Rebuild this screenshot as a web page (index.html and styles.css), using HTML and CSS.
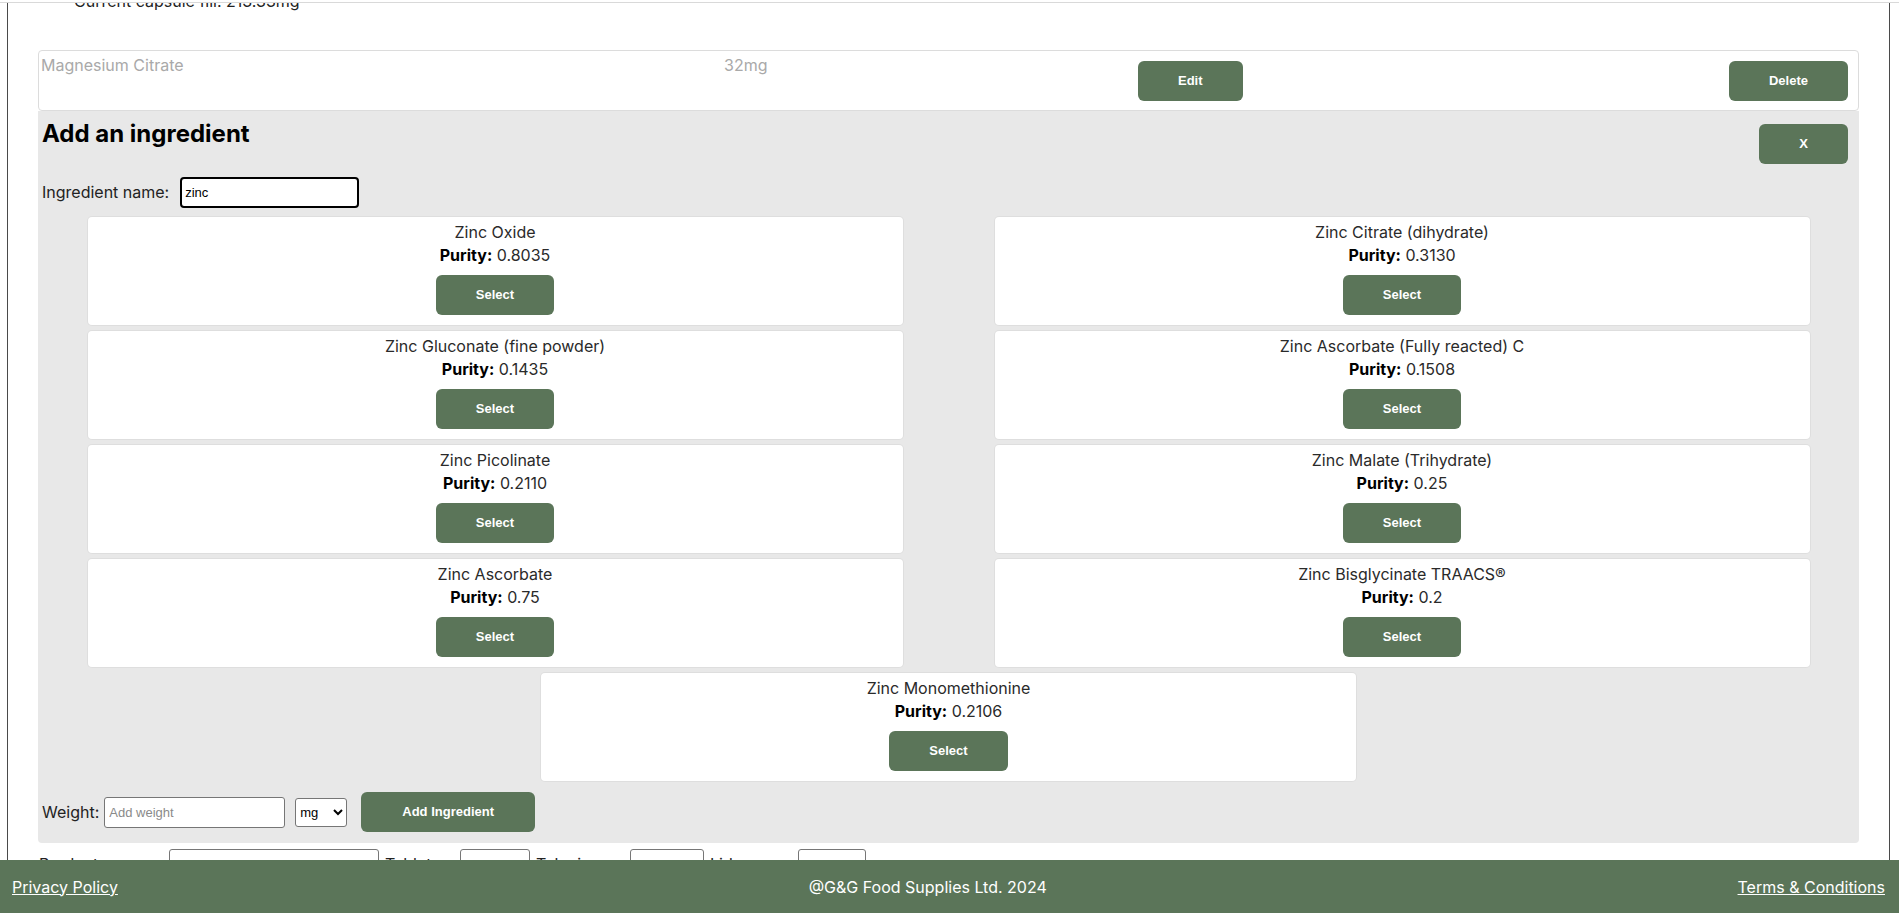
FILE: index.html
```html
<!DOCTYPE html>
<html lang="en">
<head>
<meta charset="utf-8">
<title>Add an ingredient</title>
<link rel="stylesheet" href="styles.css">
</head>
<body>
<div class="topbar"></div>
<div class="page">
  <p class="fill">Current capsule fill: 213.33mg</p>
  <div class="item-row">
    <span class="item-text">Magnesium Citrate</span>
    <span class="item-text">32mg</span>
    <button class="btn btn-edit">Edit</button>
    <button class="btn">Delete</button>
  </div>
  <section class="panel">
    <div class="panel-head">
      <h2>Add an ingredient</h2>
      <button class="btn btn-close">X</button>
    </div>
    <div class="name-row">
      <label class="lbl">Ingredient name:</label>
      <input class="name-input" type="text" value="zinc">
    </div>
    <div class="results">
      <div class="card"><div class="card-line">Zinc Oxide</div><div class="card-line"><b>Purity:</b> 0.8035</div><button class="btn btn-select">Select</button></div>
      <div class="card"><div class="card-line">Zinc Citrate (dihydrate)</div><div class="card-line"><b>Purity:</b> 0.3130</div><button class="btn btn-select">Select</button></div>
      <div class="card"><div class="card-line">Zinc Gluconate (fine powder)</div><div class="card-line"><b>Purity:</b> 0.1435</div><button class="btn btn-select">Select</button></div>
      <div class="card"><div class="card-line">Zinc Ascorbate (Fully reacted) C</div><div class="card-line"><b>Purity:</b> 0.1508</div><button class="btn btn-select">Select</button></div>
      <div class="card"><div class="card-line">Zinc Picolinate</div><div class="card-line"><b>Purity:</b> 0.2110</div><button class="btn btn-select">Select</button></div>
      <div class="card"><div class="card-line">Zinc Malate (Trihydrate)</div><div class="card-line"><b>Purity:</b> 0.25</div><button class="btn btn-select">Select</button></div>
      <div class="card"><div class="card-line">Zinc Ascorbate</div><div class="card-line"><b>Purity:</b> 0.75</div><button class="btn btn-select">Select</button></div>
      <div class="card"><div class="card-line">Zinc Bisglycinate TRAACS®</div><div class="card-line"><b>Purity:</b> 0.2</div><button class="btn btn-select">Select</button></div>
      <div class="card"><div class="card-line">Zinc Monomethionine</div><div class="card-line"><b>Purity:</b> 0.2106</div><button class="btn btn-select">Select</button></div>
    </div>
    <div class="weight-row">
      <label class="lbl">Weight:</label>
      <input class="weight-input" type="text" placeholder="Add weight">
      <select class="unit"><option>mg</option><option>g</option></select>
      <button class="btn btn-add">Add Ingredient</button>
    </div>
  </section>
  <div class="product-row">
    <label class="plbl plbl-1">Product name:</label>
    <input class="p-input p-in-1" type="text">
    <label class="plbl plbl-2">Tablets:</label>
    <input class="p-input p-in-2" type="text">
    <label class="plbl plbl-3">Tub size:</label>
    <input class="p-input p-in-3" type="text">
    <label class="plbl plbl-4">Lid:</label>
    <input class="p-input p-in-4" type="text">
  </div>
</div>
<footer class="footer">
  <a href="#">Privacy Policy</a>
  <span>@G&amp;G Food Supplies Ltd. 2024</span>
  <a href="#">Terms &amp; Conditions</a>
</footer>
</body>
</html>
```

FILE: styles.css
```css
html, body {
  margin: 0;
  padding: 0;
  height: 100%;
  overflow: hidden;
  background: #fff;
}
body {
  font-family: Inter, "Noto Sans", sans-serif;
  font-size: 16px;
  color: #222;
}
.topbar {
  position: fixed;
  top: 0;
  left: 0;
  right: 0;
  height: 2px;
  background: #fff;
  border-bottom: 1px solid #d9d9d9;
  z-index: 5;
}
.page {
  display: flow-root;
  margin: 0 9px 0 7px;
  padding: 0 30px;
  border-left: 1px solid #4a4a4a;
  border-right: 1px solid #4a4a4a;
  min-height: 900px;
}
.fill {
  margin: -8px 0 0 36px;
  line-height: 19px;
  color: #222;
}
.btn {
  box-sizing: border-box;
  font-family: "Liberation Sans", Arial, sans-serif;
  font-weight: bold;
  font-size: 13px;
  color: #fff;
  background: #5b7559;
  border: none;
  border-radius: 6px;
  height: 40px;
  padding: 0 40px 2px;
  cursor: pointer;
}
.item-row {
  margin-top: 39px;
  display: grid;
  grid-template-columns: 683px 414px 1fr auto;
  align-items: start;
  padding: 5px 10px 9px 2px;
  background: #fff;
  border: 1px solid #dcdcdc;
  border-radius: 4px;
}
.item-text {
  color: #a9a9a9;
  line-height: 19px;
}
.item-row .btn {
  margin-top: 5px;
}
.btn-edit {
  justify-self: start;
}
.panel {
  background: #e8e8e8;
  padding: 8px 11px 11px 4px;
  border-radius: 0 0 4px 4px;
}
.panel-head {
  display: flex;
  justify-content: space-between;
  align-items: flex-start;
}
.panel-head h2 {
  margin: 0;
  font-size: 24px;
  font-weight: 700;
  color: #000;
  line-height: 29px;
}
.btn-close {
  margin-top: 5px;
}
.name-row {
  margin-top: 13px;
  display: flex;
  align-items: center;
}
.lbl {
  color: #222;
  line-height: 19px;
}
.name-row .lbl {
  margin-right: 11px;
}
.name-input {
  box-sizing: border-box;
  width: 179px;
  height: 31px;
  border: 2px solid #000;
  border-radius: 4px;
  padding: 1px 3px;
  font-family: "Liberation Sans", Arial, sans-serif;
  font-size: 13px;
  color: #000;
  background: #fff;
  outline: none;
}
.results {
  margin: 9px -7px 0 0;
  display: flex;
  flex-wrap: wrap;
  justify-content: center;
  column-gap: 92px;
  row-gap: 6px;
}
.card {
  box-sizing: border-box;
  width: 815px;
  height: 108px;
  background: #fff;
  border-radius: 4px;
  box-shadow: 0 0 0 1px #dedede;
  padding: 4px 0 10px;
  text-align: center;
}
.card-line {
  line-height: 23px;
  color: #2a2a2a;
}
.card-line b {
  color: #000;
}
.btn-select {
  margin-top: 8px;
}
.weight-row {
  margin-top: 11px;
  display: flex;
  align-items: center;
}
.weight-row .lbl {
  margin-right: 5px;
}
.weight-input {
  box-sizing: border-box;
  width: 181px;
  height: 31px;
  border: 1px solid #767676;
  border-radius: 3px;
  padding: 1px 4px;
  font-family: "Liberation Sans", Arial, sans-serif;
  font-size: 13px;
  background: #fff;
}
.weight-input::placeholder {
  color: #8a8a8a;
}
.unit {
  box-sizing: border-box;
  margin-left: 10px;
  width: 52px;
  height: 29px;
  border: 1px solid #767676;
  border-radius: 3px;
  font-family: "Liberation Sans", Arial, sans-serif;
  font-size: 13px;
  background: #fff;
  color: #000;
}
.btn-add {
  margin-left: 14px;
  padding: 0 41px 2px;
}
.product-row {
  margin-top: 6px;
  display: flex;
  align-items: center;
}
.plbl {
  box-sizing: border-box;
  color: #222;
  line-height: 19px;
  padding-left: 6px;
  white-space: nowrap;
  overflow: hidden;
}
.plbl-1 { width: 131px; padding-left: 1px; }
.plbl-2 { width: 81px; }
.plbl-3 { width: 100px; }
.plbl-4 { width: 94px; }
.p-input {
  box-sizing: border-box;
  height: 30px;
  border: 1px solid #767676;
  border-radius: 3px;
  background: #fff;
}
.p-in-1 { width: 210px; }
.p-in-2 { width: 70px; }
.p-in-3 { width: 74px; }
.p-in-4 { width: 68px; }
.footer {
  position: fixed;
  left: 0;
  right: 0;
  bottom: 0;
  height: 53px;
  box-sizing: border-box;
  padding: 0 14px 0 12px;
  background: #5b7559;
  color: #fff;
  display: flex;
  justify-content: space-between;
  align-items: center;
  font-size: 16px;
  z-index: 5;
}
.footer a {
  color: #fff;
  text-decoration: underline;
}
```
